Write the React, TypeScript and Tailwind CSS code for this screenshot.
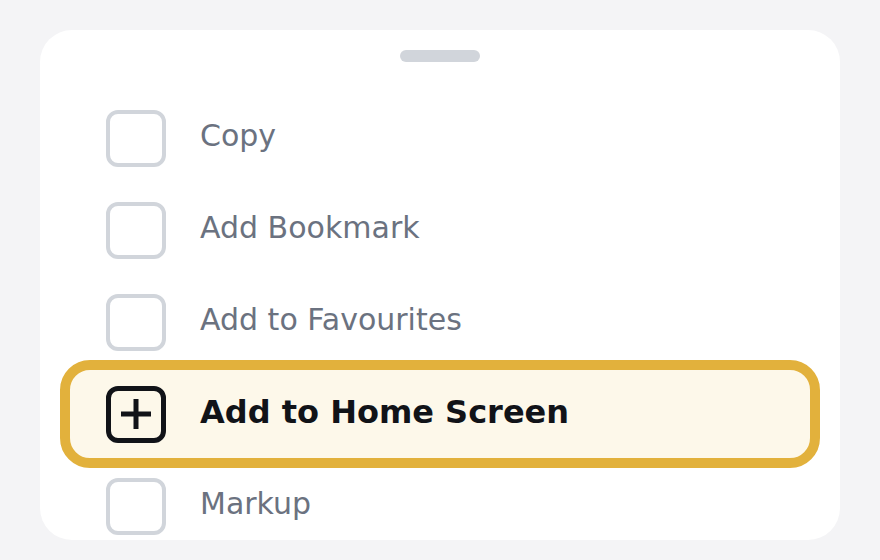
const items = [
  { label: "Copy", active: false },
  { label: "Add Bookmark", active: false },
  { label: "Add to Favourites", active: false },
  { label: "Add to Home Screen", active: true },
  { label: "Markup", active: false },
];

const Row = ({ label, active }: { label: string; active: boolean }) => {
  return (
    <div
      className={
        active
          ? "flex items-center h-[108px] -my-2 rounded-[30px] border-[10px] border-[#e2b13c] bg-[#fdf8ea] pl-9"
          : "flex items-center h-[92px] rounded-[30px] border-[10px] border-transparent pl-9"
      }
    >
      {active ? (
        <div className="w-[60px] h-[57px] rounded-[12px] border-[5px] border-[#111318] flex items-center justify-center">
          <svg width="30" height="30" viewBox="0 0 30 30">
            <path d="M15 0v30M0 15h30" stroke="#111318" strokeWidth="5" />
          </svg>
        </div>
      ) : (
        <div className="w-[60px] h-[57px] rounded-[12px] border-4 border-[#d1d5db]"></div>
      )}
      <span
        className={
          active
            ? "ml-[34px] mb-1 text-[32px] font-bold text-[#111318] leading-none"
            : "ml-[34px] mb-1 text-[30px] text-[#6b7280] leading-none"
        }
      >
        {label}
      </span>
    </div>
  );
};

export default function App() {
  return (
    <div
      className="w-[880px] h-[560px] bg-[#f4f4f6] px-10 pt-[30px] pb-5"
      style={{ fontFamily: '"DejaVu Sans", sans-serif' }}
    >
      <div className="h-full bg-white rounded-[32px] overflow-hidden flex flex-col">
        <div className="flex justify-center pt-5">
          <div className="w-20 h-3 rounded-full bg-[#d1d5db]"></div>
        </div>
        <div className="flex flex-col px-5 mt-[30px]">
          {items.map((item, index) => (
            <Row key={index} label={item.label} active={item.active} />
          ))}
        </div>
      </div>
    </div>
  );
}
